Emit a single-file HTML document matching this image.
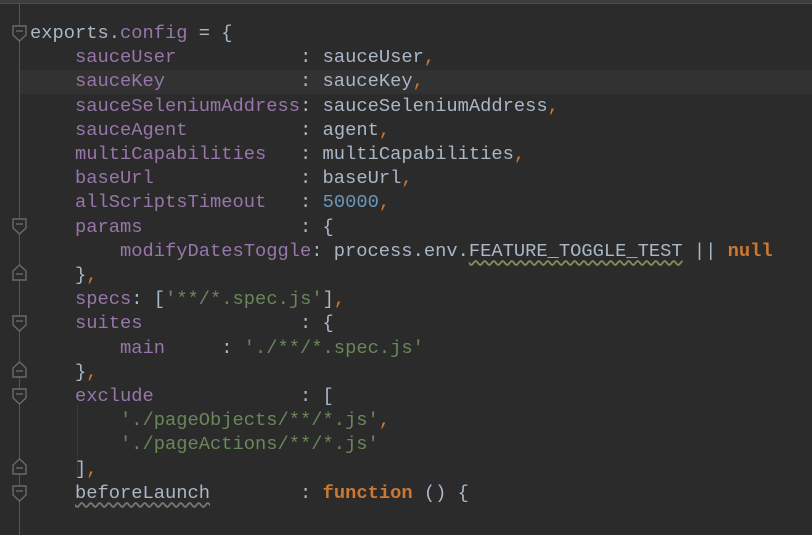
<!DOCTYPE html>
<html><head><meta charset="utf-8"><style>
html,body{margin:0;padding:0;background:#2b2b2b;width:812px;height:535px;overflow:hidden}
.top{position:absolute;left:0;top:0;width:812px;height:3px;background:#3c3f41;border-bottom:1px solid #4a4a4a}
.gut{position:absolute;left:19px;top:4px;width:1px;height:531px;background:#555}
.hl{position:absolute;left:20px;top:70px;width:792px;height:24px;background:#323232}
pre{position:absolute;left:30px;top:21px;margin:0;font-family:"Liberation Mono",monospace;font-size:18.75px;line-height:24.2px;color:#a9b7c6}
.p{color:#9876aa}.o{color:#cc7832}.ob{color:#cc7832;font-weight:bold}.s{color:#6a8759}.n{color:#6897bb}
.w{text-decoration:underline wavy #8a8a5a;text-underline-offset:4px}
.wg{text-decoration:underline wavy #777;text-underline-offset:4px}
.guide{position:absolute;left:77px;width:1px;background:#3a3a3a}
</style></head><body>
<div class="top"></div>
<div class="hl"></div>
<div class="gut"></div>
<div class="guide" style="top:405px;height:70px"></div>
<svg width="812" height="535" style="position:absolute;left:0;top:0">
<g fill="#2b2b2b" stroke="#6a6a6a" stroke-width="1.4">
<path d="M13 26h13v9l-6.5 6l-6.5-6z"/><line x1="16" y1="31" x2="23" y2="31"/>
<path d="M13 219h13v9l-6.5 6l-6.5-6z"/><line x1="16" y1="224" x2="23" y2="224"/>
<path d="M13 280h13v-9l-6.5-6l-6.5 6z"/><line x1="16" y1="274" x2="23" y2="274"/>
<path d="M13 316h13v9l-6.5 6l-6.5-6z"/><line x1="16" y1="321" x2="23" y2="321"/>
<path d="M13 377h13v-9l-6.5-6l-6.5 6z"/><line x1="16" y1="371" x2="23" y2="371"/>
<path d="M13 389h13v9l-6.5 6l-6.5-6z"/><line x1="16" y1="394" x2="23" y2="394"/>
<path d="M13 474h13v-9l-6.5-6l-6.5 6z"/><line x1="16" y1="468" x2="23" y2="468"/>
<path d="M13 486h13v9l-6.5 6l-6.5-6z"/><line x1="16" y1="491" x2="23" y2="491"/>
</g></svg>
<pre>exports.<span class="p">config</span> = {
    <span class="p">sauceUser</span>           : sauceUser<span class="o">,</span>
    <span class="p">sauceKey</span>            : sauceKey<span class="o">,</span>
    <span class="p">sauceSeleniumAddress</span>: sauceSeleniumAddress<span class="o">,</span>
    <span class="p">sauceAgent</span>          : agent<span class="o">,</span>
    <span class="p">multiCapabilities</span>   : multiCapabilities<span class="o">,</span>
    <span class="p">baseUrl</span>             : baseUrl<span class="o">,</span>
    <span class="p">allScriptsTimeout</span>   : <span class="n">50000</span><span class="o">,</span>
    <span class="p">params</span>              : {
        <span class="p">modifyDatesToggle</span>: process.env.<span class="w">FEATURE_TOGGLE_TEST</span> || <span class="ob">null</span>
    }<span class="o">,</span>
    <span class="p">specs</span>: [<span class="s">'**/*.spec.js'</span>]<span class="o">,</span>
    <span class="p">suites</span>              : {
        <span class="p">main</span>     : <span class="s">'./**/*.spec.js'</span>
    }<span class="o">,</span>
    <span class="p">exclude</span>             : [
        <span class="s">'./pageObjects/**/*.js'</span><span class="o">,</span>
        <span class="s">'./pageActions/**/*.js'</span>
    ]<span class="o">,</span>
    <span class="wg">beforeLaunch</span>        : <span class="ob">function</span> () {</pre>
</body></html>
